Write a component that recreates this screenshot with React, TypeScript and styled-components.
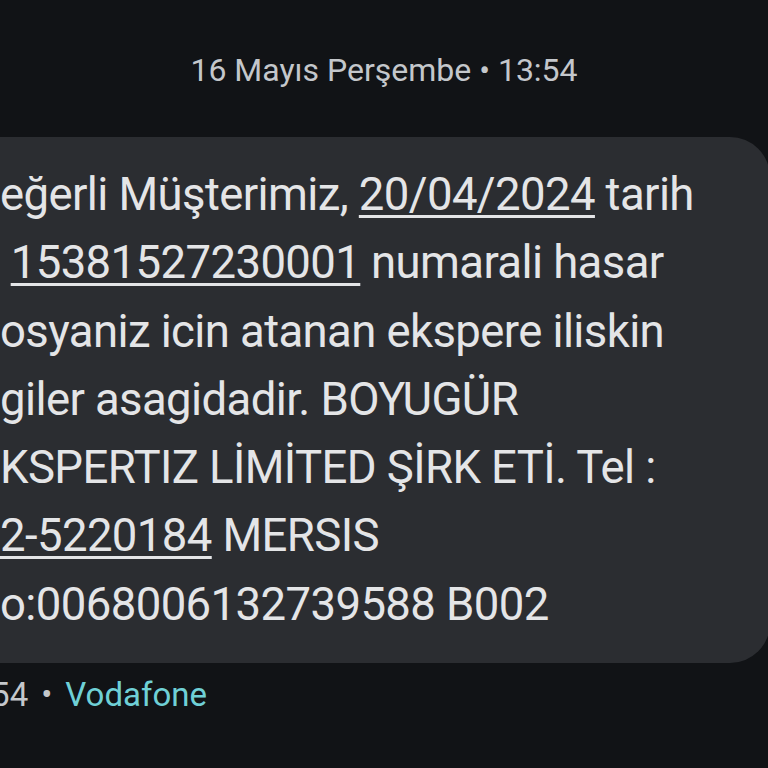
import styled, { createGlobalStyle } from "styled-components";

const GlobalStyle = createGlobalStyle`
  html, body {
    margin: 0;
    padding: 0;
    background: #111316;
  }
  body {
    font-family: Roboto, "Noto Sans", "Liberation Sans", sans-serif;
  }
`;

type Part = { text: string; link?: boolean };
type MessageLine = { lead: string; leadWidth: number; linkLead?: boolean; parts: Part[] };

// the bubble runs past the left edge of the screen, so each line's first
// characters sit in a "lead" that is pushed out of view
const lines: MessageLine[] = [
  {
    lead: "D",
    leadWidth: 33,
    parts: [{ text: "eğerli Müşterimiz, " }, { text: "20/04/2024", link: true }, { text: " tarih" }],
  },
  {
    lead: "li",
    leadWidth: 22,
    parts: [{ text: " " }, { text: "15381527230001", link: true }, { text: " numarali hasar" }],
  },
  { lead: "d", leadWidth: 28, parts: [{ text: "osyaniz icin atanan ekspere iliskin" }] },
  { lead: "bil", leadWidth: 48, parts: [{ text: "giler asagidadir. BOYUGÜR" }] },
  { lead: "E", leadWidth: 30, parts: [{ text: "KSPERTIZ LİMİTED ŞİRK ETİ. Tel :" }] },
  {
    lead: "053",
    leadWidth: 72,
    linkLead: true,
    parts: [{ text: "2-5220184", link: true }, { text: " MERSIS" }],
  },
  { lead: "N", leadWidth: 34, parts: [{ text: "o:0068006132739588 B002" }] },
];

const App = () => {
  return (
    <>
      <GlobalStyle />
      <Page>
        <DateHeader>16 Mayıs Perşembe • 13:54</DateHeader>
        <Bubble>
          {lines.map((line, i) => (
            <Line key={i}>
              <Lead $w={line.leadWidth} $link={line.linkLead}>
                {line.lead}
              </Lead>
              {line.parts.map((p, j) =>
                p.link ? <Link key={j}>{p.text}</Link> : <span key={j}>{p.text}</span>
              )}
            </Line>
          ))}
        </Bubble>
        <Meta>
          <span>13:54</span>
          <span>•</span>
          <Carrier>Vodafone</Carrier>
        </Meta>
      </Page>
    </>
  );
};

export default App;

const Page = styled.main`
  width: 768px;
  height: 768px;
  overflow: hidden;
  background: #111316;
  display: flex;
  flex-direction: column;
  padding-top: 50px;
  box-sizing: border-box;
`;

const DateHeader = styled.div`
  text-align: center;
  font-size: 32px;
  line-height: 40px;
  color: #c4c7cb;
  margin-bottom: 47px;
`;

const Bubble = styled.div`
  margin-left: -60px;
  width: 830px;
  box-sizing: border-box;
  flex-shrink: 0;
  padding: 24px 0 24px 60px;
  background: #2b2d31;
  border-radius: 40px;
`;

const Line = styled.p`
  margin: 0;
  white-space: nowrap;
  font-size: 45.5px;
  letter-spacing: -0.6px;
  line-height: 68.3px;
  color: #e4e5e7;
`;

const Lead = styled.span<{ $w: number; $link?: boolean }>`
  display: inline-block;
  vertical-align: top;
  width: ${({ $w }) => $w}px;
  margin-left: ${({ $w }) => -$w}px;
  overflow: hidden;
  text-align: right;
  text-decoration: ${({ $link }) => ($link ? "underline" : "none")};
  text-decoration-thickness: 3px;
  text-underline-offset: 5px;
`;

const Link = styled.span`
  text-decoration: underline;
  text-decoration-thickness: 3px;
  text-underline-offset: 5px;
`;

const Meta = styled.div`
  display: flex;
  align-items: center;
  gap: 13px;
  margin-top: 12px;
  margin-left: -54px;
  font-size: 33px;
  line-height: 40px;
  color: #c4c7cb;
  white-space: nowrap;
`;

const Carrier = styled.span`
  color: #6fd0d6;
`;
